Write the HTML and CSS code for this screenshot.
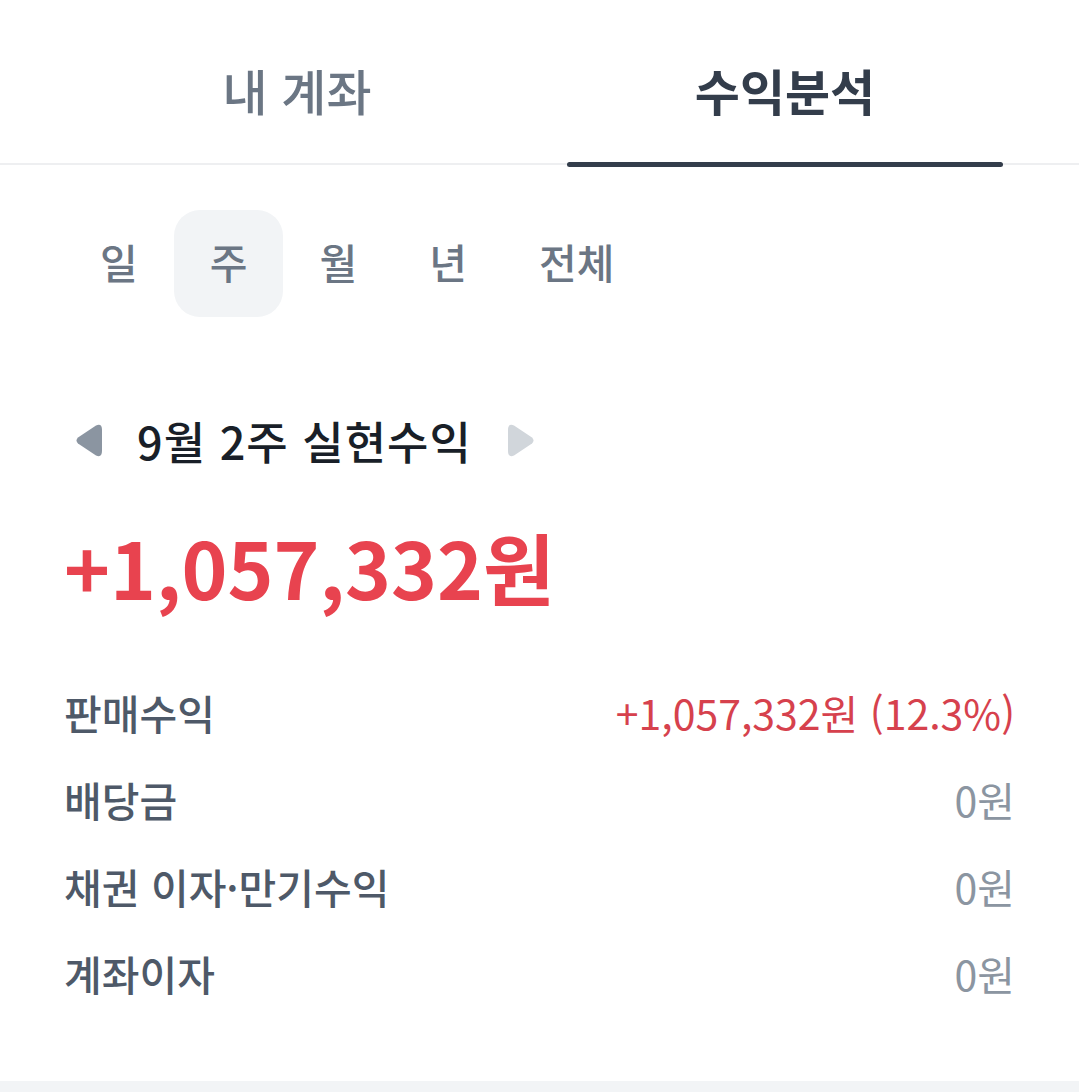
FILE: index.html
```html
<!DOCTYPE html>
<html lang="ko">
<head>
  <meta charset="UTF-8">
  <meta name="viewport" content="width=device-width, initial-scale=1.0">
  <title>수익분석</title>
  <link rel="stylesheet" href="styles.css">
</head>
<body>
  <nav class="tabs">
    <div class="tab">내 계좌</div>
    <div class="tab active">수익분석</div>
  </nav>

  <div class="periods">
    <div class="period">일</div>
    <div class="period selected">주</div>
    <div class="period">월</div>
    <div class="period">년</div>
    <div class="period">전체</div>
  </div>

  <div class="range">
    <svg class="arrow" width="28" height="33" viewBox="0 0 28 33">
      <path d="M3 19.5 Q0 16.5 3 13.5 L21 1.5 Q27 -1 27 6 L27 27 Q27 34 21 31.5 Z" fill="#8b95a1"/>
    </svg>
    <span class="range-title">9월 2주 실현수익</span>
    <svg class="arrow" width="28" height="33" viewBox="0 0 28 33">
      <path d="M25 19.5 Q28 16.5 25 13.5 L7 1.5 Q1 -1 1 6 L1 27 Q1 34 7 31.5 Z" fill="#d1d6db"/>
    </svg>
  </div>

  <div class="total">+1,057,332원</div>

  <!-- 수익 내역 -->
  <div class="details">
    <div class="detail-row">
      <span class="label">판매수익</span>
      <span class="value plus">+1,057,332원 (12.3%)</span>
    </div>
    <div class="detail-row">
      <span class="label">배당금</span>
      <span class="value">0원</span>
    </div>
    <div class="detail-row">
      <span class="label">채권 이자·만기수익</span>
      <span class="value">0원</span>
    </div>
    <div class="detail-row">
      <span class="label">계좌이자</span>
      <span class="value">0원</span>
    </div>
  </div>

  <div class="bottom-band"></div>
</body>
</html>
```

FILE: styles.css
```css
body {
  margin: 0;
  font-family: "Noto Sans CJK KR", "Noto Sans", sans-serif;
  background-color: #fff;
  color: #191f28;
}

.tabs {
  display: flex;
  padding: 0 50px 0 53px;
  height: 163px;
  border-bottom: 2px solid #eeeff1;
}

.tab {
  flex: 1;
  position: relative;
  text-align: center;
  font-size: 49px;
  font-weight: 500;
  line-height: 60px;
  padding-top: 60px;
  color: #6b7684;
}

.tab.active {
  font-weight: 700;
  color: #333d4b;
}

.tab.active::after {
  content: "";
  position: absolute;
  left: 26px;
  right: 26px;
  bottom: -4px;
  height: 5px;
  border-radius: 3px;
  background-color: #333d4b;
}

.periods {
  display: flex;
  margin-top: 45px;
  padding-left: 64px;
}

.period {
  box-sizing: border-box;
  height: 107px;
  line-height: 103px;
  padding: 0 36px 4px;
  border-radius: 26px;
  font-size: 41px;
  font-weight: 500;
  color: #6b7684;
}

.period.selected {
  background-color: #f2f4f6;
}

.range {
  display: flex;
  align-items: center;
  height: 60px;
  margin-top: 93px;
  padding-left: 75px;
}

.range-title {
  margin: 0 35px 0 34px;
  font-size: 45px;
  font-weight: 500;
  letter-spacing: 1px;
  color: #191f28;
}

.total {
  margin-top: 51px;
  padding-left: 64px;
  font-size: 78px;
  font-weight: 700;
  line-height: 90px;
  color: #e8434f;
}

.details {
  margin-top: 57px;
  padding: 0 64px;
}

.detail-row {
  display: flex;
  justify-content: space-between;
  align-items: center;
  height: 87px;
  font-size: 41px;
}

.label {
  font-weight: 500;
  color: #4e5968;
}

.value {
  color: #8b95a1;
}

.value.plus {
  color: #d6414d;
}

.bottom-band {
  margin-top: 65px;
  height: 30px;
  background-color: #f2f4f6;
}
```
